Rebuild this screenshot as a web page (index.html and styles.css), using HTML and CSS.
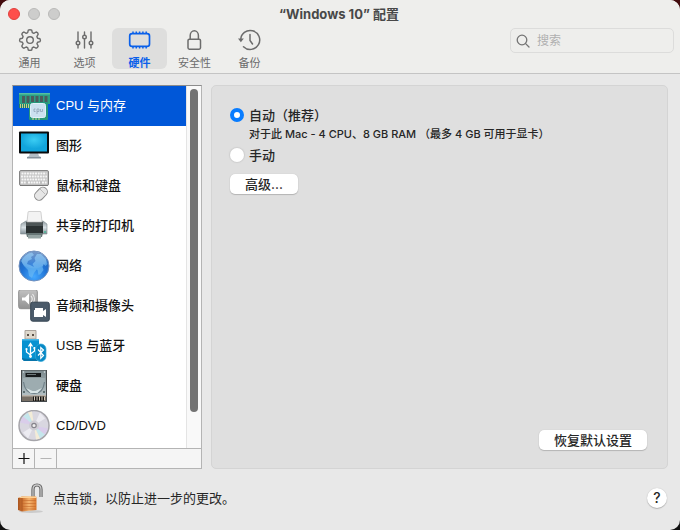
FILE: index.html
```html
<!DOCTYPE html>
<html lang="zh-CN">
<head>
<meta charset="utf-8">
<meta name="viewport" content="width=device-width, initial-scale=1">
<title>“Windows 10” 配置</title>
<link rel="stylesheet" href="styles.css">
</head>
<body>
<div class="window">
  <header class="header">
    <div class="titlebar">
      <div class="lights">
        <button class="light light-close" aria-label="关闭"></button>
        <button class="light" aria-label="最小化"></button>
        <button class="light" aria-label="缩放"></button>
      </div>
      <h1 class="title">“Windows 10” 配置</h1>
    </div>
    <div class="toolbar">
      <nav class="tabs">
        <button class="tab">
          <svg class="tab-icon" viewBox="0 0 24 24" fill="none" stroke="currentColor" stroke-width="1.4" stroke-linejoin="round">
            <path d="M10.300 2.200Q12 1.200 13.700 2.200L14.300 4.600 15.800 5.300 18.200 4Q20 4.500 20.200 6.200L18.900 8.600 19.600 10.200 22 10.800Q22.900 12.200 22 13.600L19.600 14.200 18.900 15.700 20.200 18Q19.800 19.900 18 20.200L15.800 19 14.300 19.600 13.700 22Q12 22.800 10.300 22L9.700 19.600 8.200 19 6 20.200Q4.200 19.900 3.800 18L5.100 15.700 4.400 14.200 2 13.600Q1.100 12.200 2 10.800L4.400 10.200 5.100 8.600 3.800 6.200Q4.200 4.400 6 4L8.200 5.300 9.700 4.600z"/>
            <circle cx="12" cy="12.100" r="3.300"/>
          </svg>
          <span>通用</span>
        </button>
        <button class="tab">
          <svg class="tab-icon" viewBox="0 0 24 24" fill="none" stroke="currentColor" stroke-width="1.4" stroke-linecap="round">
            <path d="M5 4v9M5 17v3M11.500 4v3M11.500 11v9M18 4v9M18 17v3"/>
            <circle cx="5" cy="15" r="1.800"/><circle cx="11.500" cy="9" r="1.800"/><circle cx="18" cy="15" r="1.800"/>
          </svg>
          <span>选项</span>
        </button>
        <button class="tab tab-active" aria-current="page">
          <svg class="tab-icon" viewBox="0 0 24 24" fill="none" stroke="currentColor">
            <rect x="1.700" y="5.700" width="19.800" height="12.600" rx="2.400" stroke-width="1.700"/>
            <path stroke-width="1.500" d="M5 3.500v2M8.300 3.500v2M11.600 3.500v2M14.900 3.500v2M18.200 3.500v2M5 18.500v2M8.300 18.500v2M11.600 18.500v2M14.900 18.500v2M18.200 18.500v2"/>
          </svg>
          <span>硬件</span>
        </button>
        <button class="tab">
          <svg class="tab-icon" viewBox="0 0 24 24" fill="none" stroke="currentColor" stroke-width="1.5">
            <rect x="5" y="11.200" width="12.500" height="10" rx="1.400"/>
            <path d="M7.200 11V7.400a4.100 4.600 0 0 1 8.200 0V11"/>
          </svg>
          <span>安全性</span>
        </button>
        <button class="tab">
          <svg class="tab-icon" viewBox="0 0 24 24" fill="none" stroke="currentColor" stroke-width="1.5">
            <path d="M2.700 12A9.500 9.500 0 1 1 5.500 18.700M12 6.500v6l2.500 3.500" stroke-linecap="round"/>
            <path d="M0 10.500h5.800l-2.900 3.700z" fill="currentColor" stroke="none"/>
          </svg>
          <span>备份</span>
        </button>
      </nav>
      <label class="search">
        <svg class="search-icon" viewBox="0 0 14 14" fill="none" stroke="currentColor" stroke-width="1.3" stroke-linecap="round"><circle cx="6" cy="6" r="4.800"/><path d="M9.600 9.600l3.400 3.400"/></svg>
        <input class="search-input" type="search" placeholder="搜索" aria-label="搜索">
      </label>
    </div>
  </header>

  <main class="content">
    <aside class="sidebar">
      <div class="device-area">
        <ul class="devices">
          <li><button class="device device-active">
            <svg class="device-icon" viewBox="0 0 32 32">
              <path d="M1 3h31v11H1z" fill="#2b9f83"/><path d="M1 3h31v1.500H1z" fill="#55bfa0"/>
              <path d="M4 6h3v7H4zM8.500 6h3v7h-3zM13 6h3v7h-3zM17.500 6h3v7h-3zM22 6h3v7h-3zM26.500 6h3v7h-3z" fill="#4b5b5c"/>
              <path d="M1 14h13v4H1z" fill="#1e7f67"/><path d="M2 14h1v4H2zM4 14h1v4H4zM6 14h1v4H6zM8 14h1v4H8zM10 14h1v4h-1z" fill="#c9d08a"/>
              <rect x="11" y="12" width="19" height="18" rx="1" fill="#27967b"/>
              <path d="M12 26h2M15 28v2M18 28v2M21 28v2M12 23h2" stroke="#d5d789"/>
              <rect x="12.500" y="13.500" width="15" height="14" rx="2" fill="#cbe0ef" stroke="#e0f0f8"/>
              <path d="M17.500 19H16v2.500h1.500M19 24v-5h2v2.500h-2M22.500 19v2.500h2V19" fill="none" stroke="#8ea2b6" stroke-width=".8"/>
            </svg><span>CPU 与内存</span></button></li>
          <li><button class="device">
            <svg class="device-icon" viewBox="0 0 32 32">
              <defs><radialGradient id="screen" cx=".5" cy=".35"><stop offset="0" stop-color="#3bcdf3"/><stop offset="1" stop-color="#12a5dc"/></radialGradient></defs>
              <path d="M12 23h8l1 3 2 1v1H9v-1l2-1z" fill="#b2bdc5"/><path d="M9 27h14v1.500H9z" fill="#86929c"/>
              <rect x="1" y="1.500" width="30" height="22" rx="1" fill="#080a0c"/><path d="M3 3.500h26v18H3z" fill="url(#screen)"/>
            </svg><span>图形</span></button></li>
          <li><button class="device">
            <svg class="device-icon" viewBox="0 0 32 32">
              <rect x="1.500" y=".5" width="29" height="15" rx="1.500" fill="#c1c1c1" stroke="#858585"/>
              <path d="M3.500 3.500h25M3 6.500h26M3.500 9.500h25M3 12.500h5M10 12.500h12M24 12.500h5" stroke="#f6f6f6" stroke-width="1.900" stroke-dasharray="2 .7"/>
              <path d="M2 15.500h28" stroke="#777"/>
              <rect x="18.500" y="16.500" width="9" height="14.500" rx="4.400" transform="rotate(43 23 23.700)" fill="#e6e6e6" stroke="#8b8b8b"/>
              <path d="M21 18l6 6" stroke="#aaa" stroke-width=".7"/>
            </svg><span>鼠标和键盘</span></button></li>
          <li><button class="device">
            <svg class="device-icon" viewBox="0 0 32 32">
              <defs><linearGradient id="printer" x2="0" y2="1"><stop offset="0" stop-color="#8d989d"/><stop offset=".5" stop-color="#d8e0e4"/><stop offset="1" stop-color="#828f96"/></linearGradient></defs>
              <path d="M3 14l5-3h17l4 3v10H2.500z" fill="url(#printer)" stroke="#7e898e" stroke-width=".6"/>
              <path d="M8 13.500h17V24H8z" fill="#2b3132"/><path d="M8 12h17v4H8z" fill="#4d5556"/>
              <path d="M9 12l1-9.500q0-1 1-1h11q1 0 1 1L24 12z" fill="#f3f3f3" stroke="#b6b6b6" stroke-width=".6"/>
              <path d="M8 23h17l-1 4H9z" fill="#687777"/><path d="M10 25h13v3.500H10z" fill="#94a3a2"/><circle cx="27" cy="22" r="1" fill="#48b995"/>
            </svg><span>共享的打印机</span></button></li>
          <li><button class="device">
            <svg class="device-icon" viewBox="0 0 32 32">
              <defs>
                <radialGradient id="globe" cx=".5" cy=".85" r=".8"><stop offset="0" stop-color="#45a8ff"/><stop offset=".55" stop-color="#1f72d4"/><stop offset="1" stop-color="#2a62ae"/></radialGradient>
                <linearGradient id="gloss" x2="0" y2="1"><stop offset="0" stop-color="#fff" stop-opacity=".35"/><stop offset="1" stop-color="#fff" stop-opacity=".05"/></linearGradient>
              </defs>
              <circle cx="16" cy="16" r="15" fill="url(#globe)" stroke="#6f8fbd"/>
              <path d="M5 8q4-5 9-5.500l2 2.500-3 2 1 2-4 2-1 3 3 1 4 2 3 2-3 4-2 5-3-2-1-6-4-4-3-5zM19 4l4 0 5 5 1.500 5-2 2-2-2-1 3 1 3-3 4-2 1-1-5-3-2-2-4 3-3-1-3z" fill="#6ab8f2" opacity=".7"/>
              <ellipse cx="16" cy="10" rx="12.500" ry="8.500" fill="url(#gloss)"/>
            </svg><span>网络</span></button></li>
          <li><button class="device">
            <svg class="device-icon" viewBox="0 0 32 32">
              <defs><linearGradient id="speaker" x2="0" y2="1"><stop offset="0" stop-color="#c2c2c2"/><stop offset="1" stop-color="#929292"/></linearGradient></defs>
              <rect x=".7" y="-.3" width="18.600" height="19" rx="2" fill="url(#speaker)" stroke="#8d8d8d"/>
              <path d="M4 7.500h3l4-4v11l-4-4H4z" fill="#fff"/><path d="M13 6q2.500 3 0 6M14.500 4q4 5 0 10" fill="none" stroke="#e9e9e9" stroke-width="1.200"/>
              <rect x="12.700" y="12.200" width="18.600" height="19" rx="2" fill="#4b5b6a" stroke="#354452"/>
              <path d="M17 18h8v3l3-2v8l-3-2v2h-9v-7h1z" fill="#fff"/>
            </svg><span>音频和摄像头</span></button></li>
          <li><button class="device">
            <svg class="device-icon" viewBox="0 0 32 32">
              <path d="M7 .5h11V9H7z" fill="#ded8cc" stroke="#aaa39b"/><path d="M9 4h2v2H9zM14 4h2v2h-2z" fill="#5c5148"/>
              <path d="M4 9h17v20l-2 2H6l-2-2z" fill="#0792d1"/><path d="M4 9h17v1.500H4z" fill="#49b7e6"/><path d="M4 28q8 2 17 0v1l-2 2H6l-2-2z" fill="#0874aa"/>
              <path d="M12.500 27V14m-2 2.500 2-3 2 3M12.500 25l-4-3v-3m4 5 4-3v-3" fill="none" stroke="#fff" stroke-width="1.300"/><circle cx="12.500" cy="26.500" r="1.400" fill="#fff"/><circle cx="8.500" cy="19" r="1.100" fill="#fff"/><path d="M15.500 17h2v2h-2z" fill="#fff"/>
              <rect x="17.500" y="14" width="10.500" height="17.500" rx="5" fill="#0788c5" stroke="#38abd9" stroke-width=".7"/>
              <path d="M20 19.500l5.500 6-2.700 2.800V17.500l2.700 2.500-5.500 5.500" fill="none" stroke="#fff" stroke-width="1.200"/>
            </svg><span>USB 与蓝牙</span></button></li>
          <li><button class="device">
            <svg class="device-icon" viewBox="0 0 32 32">
              <defs><linearGradient id="disk" x2="0" y2="1"><stop offset="0" stop-color="#7c8a8e"/><stop offset="1" stop-color="#b2bfc3"/></linearGradient></defs>
              <path d="M3 0h26v32H3z" fill="#464a4c"/><path d="M4 .5h24V25H4z" fill="url(#disk)"/>
              <path d="M5 8q0 16 11 16T27 8z" fill="#9dacb0"/><path d="M5.500 12q1.500 11 10.500 11.500T26.500 12" fill="none" stroke="#71828a" stroke-width="1.200"/>
              <path d="M12.500 23l-4.500-5 6.500 3h3l6.500-3-4.500 5z" fill="#d8e4e5"/><path d="M7.500 3h15.500v4H7.500z" fill="#161a1c"/><path d="M9 4.500h9" stroke="#6e787a"/>
              <path d="M4 25h24v6H4z" fill="#776f65"/><path d="M4 25h24v1.500H4z" fill="#b9b2a9"/>
              <path d="M15 26.500h12V31H15z" fill="#191816"/><path d="M16.500 26.500v4M19 26.500v4M21.500 26.500v4M24 26.500v4M26.500 26.500v4" stroke="#d5c9b9"/>
              <circle cx="5.500" cy="2" r=".8" fill="#dce5e6"/><circle cx="26.500" cy="2" r=".8" fill="#dce5e6"/><circle cx="6" cy="22" r="1" fill="#45575a"/><circle cx="26" cy="22" r="1" fill="#45575a"/>
            </svg><span>硬盘</span></button></li>
          <li><button class="device">
            <svg class="device-icon" viewBox="0 0 32 32">
              <circle cx="16" cy="15.500" r="15" fill="#d9d7e0" stroke="#a6a5aa" stroke-width="1.500"/>
              <path d="M16 15.500l-11-9 5-4zM16 15.500l11 9-5 4z" fill="#c5e6ec"/><path d="M16 15.500L10 2.500l4-1zM16 15.500l6 13-4 1z" fill="#f3ecd8"/><path d="M16 15.500l-14-3 3-6zM16 15.500l14 3-3 6z" fill="#d9cdea"/><path d="M16 15.500l6-13 5 6zM16 15.500l-6 13-5-6z" fill="#ecebf1"/>
              <circle cx="16" cy="15.500" r="5" fill="#cfcdd4"/><circle cx="16" cy="15.500" r="2.200" fill="#eee" stroke="#85838b" stroke-width="1.200"/>
            </svg><span>CD/DVD</span></button></li>
        </ul>
        <div class="scroll-track"><div class="scroll-thumb"></div></div>
      </div>
      <div class="list-actions">
        <button class="list-action" aria-label="添加"><svg class="action-icon" viewBox="0 0 12 12" stroke="#111" stroke-width="1.2"><path d="M.5 5.500h11M6 0v11"/></svg></button>
        <button class="list-action" aria-label="移除" disabled><svg class="action-icon" viewBox="0 0 12 12" stroke="#b5b5b5"><path d="M.5 5.500h11"/></svg></button>
      </div>
    </aside>

    <section class="panel">
      <div class="options">
        <div class="option">
          <input class="radio" type="radio" name="mode" id="auto" checked>
          <label for="auto">自动（推荐）</label>
        </div>
        <p class="hint">对于此 Mac - 4 CPU、8 GB RAM （最多 4 GB 可用于显卡）</p>
        <div class="option">
          <input class="radio" type="radio" name="mode" id="manual">
          <label for="manual">手动</label>
        </div>
        <button class="push">高级...</button>
      </div>
      <button class="push push-restore">恢复默认设置</button>
    </section>
  </main>

  <footer class="footer">
    <button class="lock">
      <svg class="lock-icon" viewBox="0 0 28 32">
        <defs><linearGradient id="brass"><stop offset="0" stop-color="#a9541f"/><stop offset=".25" stop-color="#d07533"/><stop offset=".6" stop-color="#f5b570"/><stop offset="1" stop-color="#d8762d"/></linearGradient></defs>
        <ellipse cx="15" cy="29.500" rx="12" ry="1.500" fill="#bbb" opacity=".65"/>
        <path d="M17 16V7.500Q17 3 21 3t4 4.500V15" fill="none" stroke="#5d5d5d" stroke-width="3.200"/>
        <path d="M17 16V7.500Q17 3 21 3t4 4.500V15" fill="none" stroke="#c8c8c8" stroke-width="1.300"/>
        <path d="M2 16l4-1.500h14l.5 1.500v12L6 29.500 2 28z" fill="url(#brass)"/>
        <path d="M2 16l4-1.500h14l.5 1.500H6z" fill="#ffd193"/><path d="M6 18.500h14M6 21.500h14M6 24.500h14M6 27h14" stroke="#c5692b" stroke-width=".6"/>
        <path d="M6 16v13" stroke="#9c4c1c" stroke-width=".6"/>
      </svg>
      <span>点击锁，以防止进一步的更改。</span>
    </button>
    <button class="help" aria-label="帮助">?</button>
  </footer>
</div>
</body>
</html>
```

FILE: styles.css
```css
* { box-sizing: border-box; }

body {
  margin: 0;
  background: linear-gradient(#430b0d, #111 60%);
  color: #262626;
  font: 13px/16px Inter, "Noto Sans CJK SC", sans-serif;
}

button, input { font: inherit; color: inherit; }
button { margin: 0; padding: 0; border: 0; background: none; }

.window {
  display: flex;
  flex-direction: column;
  min-height: 100vh;
  overflow: hidden;
  border-radius: 10px;
  background: #e8e8e8;
}

.header {
  height: 74px;
  background: #eeeeec;
  border-bottom: 1px solid #c4c4c4;
}

.titlebar {
  display: grid;
  grid-template-columns: 1fr auto 1fr;
  align-items: center;
  height: 28px;
  padding: 0 10px 0 8px;
}

.lights { display: flex; gap: 8px; }

.light {
  width: 12px;
  height: 12px;
  border: 1px solid #b9b9b8;
  border-radius: 50%;
  background: #cdcdcc;
}

.light-close { background: #fe4e4b; border-color: #e0413e; }

.title {
  margin: 0;
  color: #484848;
  font-size: 13px;
  font-weight: 700;
}

.toolbar {
  display: flex;
  align-items: flex-start;
  justify-content: space-between;
  padding: 0 6px 0 2px;
}

.tabs { display: flex; }

.tab {
  display: flex;
  flex-direction: column;
  align-items: center;
  gap: 3px;
  width: 55px;
  height: 41px;
  border-radius: 6px;
  color: #6c6c6c;
  font-size: 11px;
}

.tab-active { background: #dededd; color: #0a60ea; font-weight: 600; }
.tab-icon { width: 24px; height: 24px; flex: none; }

.search {
  display: flex;
  align-items: center;
  gap: 7px;
  width: 164px;
  height: 25px;
  padding: 0 5px;
  border: 1px solid #dcdcdb;
  border-radius: 5px;
  color: #747474;
}

.search-icon { width: 14px; height: 14px; flex: none; }

.search-input {
  flex: 1;
  min-width: 0;
  padding: 0;
  border: 0;
  outline: 0;
  background: none;
  font-size: 12px;
}

.search-input::placeholder { color: #b0b0b0; }

.content {
  flex: 1;
  display: grid;
  grid-template-columns: 190px 1fr;
  gap: 9px;
  padding: 11px 12px 0;
}

.sidebar {
  display: flex;
  flex-direction: column;
  border: 1px solid #b4b4b4;
  border-top-color: #8c8c8c;
  background: #fff;
}

.device-area { flex: 1; display: flex; }

.devices {
  flex: 1;
  margin: 0;
  padding: 0;
  list-style: none;
  font-family: "Liberation Sans", "Noto Sans CJK SC", sans-serif;
  font-weight: 500;
}

.device {
  display: flex;
  align-items: center;
  gap: 6px;
  width: 100%;
  height: 40px;
  padding: 0 5px;
  color: #111;
}

.device-active { background: #0057d8; color: #fff; font-weight: 400; }
.device-icon { width: 32px; height: 32px; flex: none; }

.scroll-track {
  width: 15px;
  padding: 3px 3px 36px;
  border-left: 1px solid #e4e4e4;
  background: #f9f9f9;
}

.scroll-thumb { height: 100%; border-radius: 4px; background: #737373; }

.list-actions {
  display: flex;
  height: 20px;
  border-top: 1px solid #b4b4b4;
  background: #f5f5f5;
}

.list-action {
  display: grid;
  place-items: center;
  width: 22px;
  border-right: 1px solid #b4b4b4;
}

.action-icon { width: 12px; height: 12px; }

.panel {
  display: flex;
  flex-direction: column;
  justify-content: space-between;
  padding: 20px 20px 18px 18px;
  border: 1px solid #d4d4d4;
  border-radius: 5px;
  background: #dfdfdf;
  font-weight: 500;
}

.option { display: flex; align-items: center; gap: 5px; height: 18px; }

.radio {
  appearance: none;
  width: 14px;
  height: 14px;
  margin: 0;
  border-radius: 50%;
  background: #fff;
  box-shadow: 0 0 1px 1px #cfcfcf;
}

.radio:checked { border: 4px solid #087cff; box-shadow: none; }

.hint { margin: 2px 0 4px 19px; font-size: 11px; line-height: 16px; }

.push {
  min-width: 67px;
  height: 20px;
  margin-top: 10px;
  padding: 0 15px;
  border-radius: 5px;
  background: #fff;
  box-shadow: 0 1px 1px #b4b4b4, 0 0 1px #b4b4b4;
}

.push-restore { align-self: flex-end; }

.footer {
  display: flex;
  align-items: center;
  justify-content: space-between;
  height: 61px;
  padding: 0 13px 3px 16px;
}

.lock { display: flex; align-items: center; gap: 9px; }
.lock-icon { width: 28px; height: 32px; }

.help {
  width: 20px;
  height: 20px;
  border-radius: 50%;
  background: #fff;
  box-shadow: 0 1px 1px #b4b4b4, 0 0 1px #b4b4b4;
  font-size: 14px;
  font-weight: 500;
}
```
